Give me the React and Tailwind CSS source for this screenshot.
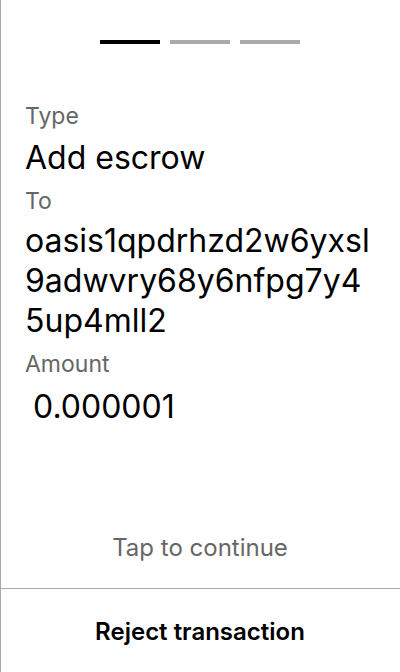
export default function App() {
  return (
    <div
      className="w-[400px] h-[672px] bg-white shadow-[inset_1px_0_0_#aaaaaa] flex flex-col text-black"
      style={{ fontFamily: "Inter, 'Noto Sans', sans-serif" }}
    >
      <div className="flex-1 flex flex-col">
        <div className="flex justify-center gap-[10px] pt-[40px]">
          <div className="w-[60px] h-[4px] bg-black" />
          <div className="w-[60px] h-[4px] bg-[#aaaaaa]" />
          <div className="w-[60px] h-[4px] bg-[#aaaaaa]" />
        </div>

        <div className="pl-[25px] pr-[23px] pt-[58px] flex flex-col">
          <div className="text-[23px] leading-[28px] text-[#666666]">Type</div>
          <div className="text-[32px] leading-[40px] mt-[8px]">Add escrow</div>
          <div className="text-[23px] leading-[28px] text-[#666666] mt-[9px]">To</div>
          <div className="text-[32px] leading-[40px] break-all mt-[6px]">
            oasis1qpdrhzd2w6yxsl9adwvry68y6nfpg7y45up4mll2
          </div>
          <div className="text-[23px] leading-[28px] text-[#666666] mt-[9px]">Amount</div>
          <div className="text-[32px] leading-[40px] mt-[9px] pl-[8px]">0.000001</div>
        </div>

        <div className="mt-auto pb-[24px] text-center text-[24px] leading-[32px] text-[#666666]">
          Tap to continue
        </div>
      </div>

      <div className="h-[84px] border-t border-[#aaaaaa] flex items-center justify-center pt-[2px]">
        <span className="text-[24px] font-semibold">Reject transaction</span>
      </div>
    </div>
  );
}
